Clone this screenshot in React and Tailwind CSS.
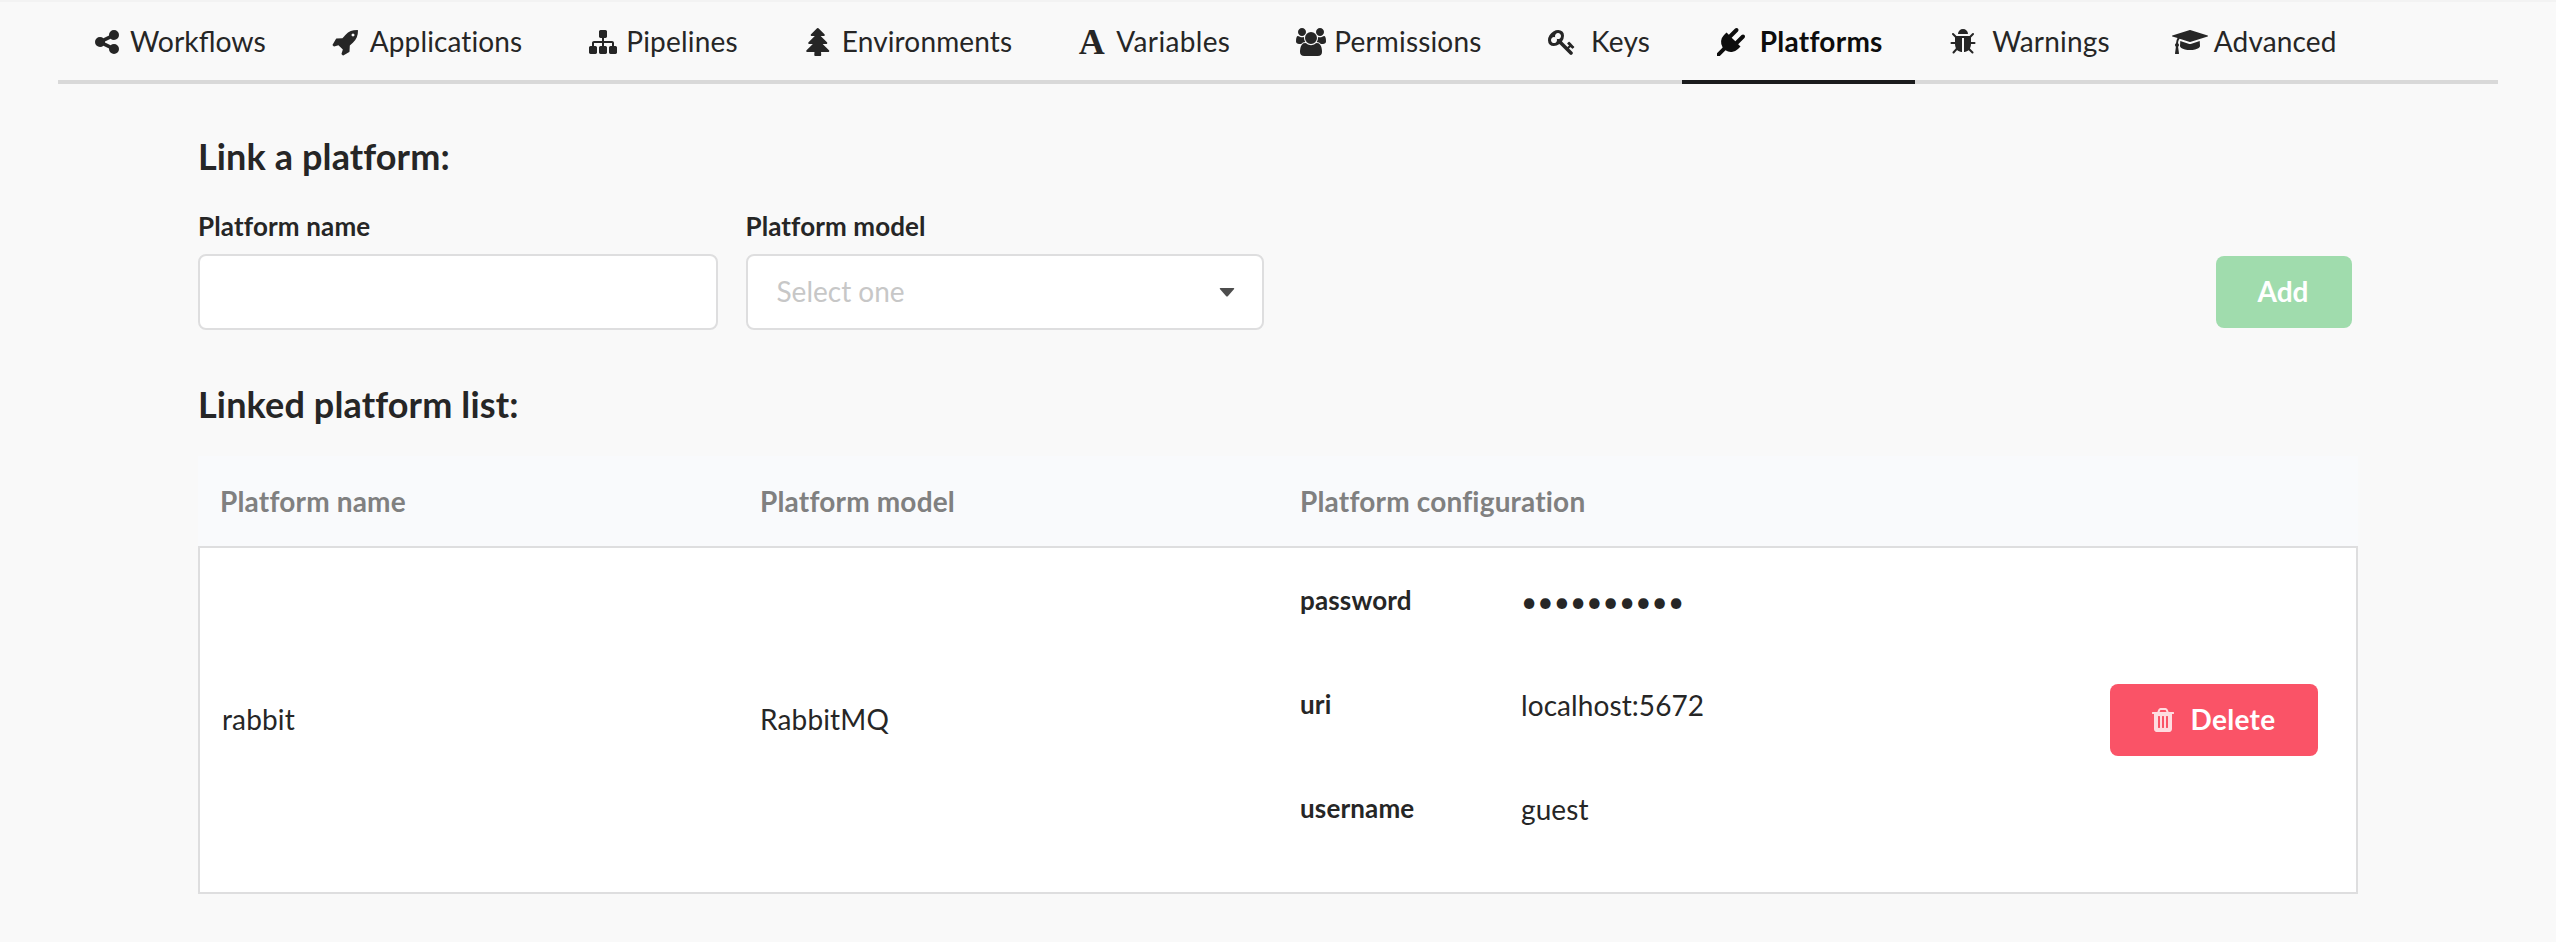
const ICONS = {
  share: {
    w: 1792,
    d: "M1344 1024q133 0 226.5 93.5t93.5 226.5-93.5 226.5-226.5 93.5-226.5-93.5-93.5-226.5q0-12 2-34l-360-180q-92 86-218 86-133 0-226.5-93.5t-93.5-226.5 93.5-226.5 226.5-93.5q126 0 218 86l360-180q-2-22-2-34 0-133 93.5-226.5t226.5-93.5 226.5 93.5 93.5 226.5-93.5 226.5-226.5 93.5q-126 0-218-86l-360 180q2 22 2 34t-2 34l360 180q92-86 218-86z",
  },
  rocket: {
    w: 1792,
    d: "M1440 448q0-40-28-68t-68-28-68 28-28 68 28 68 68 28 68-28 28-68zm224-288q0 249-75.5 430.5t-253.5 360.5q-81 80-195 176l-20 379q-2 16-16 26l-384 224q-7 4-16 4-12 0-23-9l-64-64q-13-14-8-32l85-276-281-281-276 85q-3 1-9 1-14 0-23-9l-64-64q-17-19-5-39l224-384q10-14 26-16l379-20q96-114 176-195 188-187 358-258t431-71q14 0 24 9.5t10 22.5z",
  },
  sitemap: {
    w: 1792,
    d: "M1792 1248v320q0 40-28 68t-68 28h-320q-40 0-68-28t-28-68v-320q0-40 28-68t68-28h96v-192h-512v192h96q40 0 68 28t28 68v320q0 40-28 68t-68 28h-320q-40 0-68-28t-28-68v-320q0-40 28-68t68-28h96v-192h-512v192h96q40 0 68 28t28 68v320q0 40-28 68t-68 28h-320q-40 0-68-28t-28-68v-320q0-40 28-68t68-28h96v-192q0-52 38-90t90-38h512v-192h-96q-40 0-68-28t-28-68v-320q0-40 28-68t68-28h320q40 0 68 28t28 68v320q0 40-28 68t-68 28h-96v192h512q52 0 90 38t38 90v192h96q40 0 68 28t28 68z",
  },
  tree: {
    w: 1792,
    d: "M1616 1472q0 26-19 45t-45 19h-462q1 17 6 87.5t5 108.5q0 25-18 42.5t-43 17.5h-320q-25 0-43-17.5t-18-42.5q0-38 5-108.5t6-87.5h-462q-26 0-45-19t-19-45 19-45l402-403h-229q-26 0-45-19t-19-45 19-45l402-403h-197q-26 0-45-19t-19-45 19-45l384-384q19-19 45-19t45 19l384 384q19 19 19 45t-19 45-45 19h-197l402 403q19 19 19 45t-19 45-45 19h-229l402 403q19 19 19 45z",
  },
  users: {
    w: 2048,
    d: "M657 896q-162 5-265 128h-134q-82 0-138-40.5t-56-118.5q0-353 124-353 6 0 43.5 21t97.5 42.5 119 21.5q67 0 133-23-5 37-5 66 0 139 81 256zm1071 637q0 120-73 189.5t-194 69.5h-874q-121 0-194-69.5t-73-189.5q0-53 3.5-103.5t14-109 26.5-108.5 43-97.5 62-81 85.5-53.5 111.5-20q10 0 43 21.5t73 48 107 48 135 21.5 135-21.5 107-48 73-48 43-21.5q61 0 111.5 20t85.5 53.5 62 81 43 97.5 26.5 108.5 14 109 3.5 103.5zm-1024-1277q0 106-75 181t-181 75-181-75-75-181 75-181 181-75 181 75 75 181zm704 384q0 159-112.5 271.5t-271.5 112.5-271.5-112.5-112.5-271.5 112.5-271.5 271.5-112.5 271.5 112.5 112.5 271.5zm576 225q0 78-56 118.5t-138 40.5h-134q-103-123-265-128 81-117 81-256 0-29-5-66 66 23 133 23 59 0 119-21.5t97.5-42.5 43.5-21q124 0 124 353zm-128-609q0 106-75 181t-181 75-181-75-75-181 75-181 181-75 181 75 75 181z",
  },
  key: {
    w: 1792,
    d: "M832 512q0-80-56-136t-136-56-136 56-56 136q0 42 19 83-41-19-83-19-80 0-136 56t-56 136 56 136 136 56 136-56 56-136q0-42-19-83 41 19 83 19 80 0 136-56t56-136zm851 704q0 17-49 66t-66 49q-9 0-28.5-16t-36.5-33-38.5-40-24.5-26l-96 96 220 220q28 28 28 68 0 42-39 81t-81 39q-40 0-68-28l-671-671q-176 131-365 131-163 0-265.5-102.5t-102.5-265.5q0-160 95-313t248-248 313-95q163 0 265.5 102.5t102.5 265.5q0 189-131 365l355 355 96-96q-3-3-26-24.5t-40-38.5-33-36.5-16-28.5q0-17 49-66t66-49q13 0 23 10 6 6 46 44.5t82 79.5 86.5 86 73 78 28.5 41z",
  },
  plug: {
    w: 1792,
    d: "M1755 453q37 38 37 90.5t-37 90.5l-401 400 150 150-160 160q-163 163-389.5 186.5t-411.5-100.5l-362 362h-181v-181l362-362q-124-185-100.5-411.5t186.5-389.5l160-160 150 150 400-401q38-37 91-37t90 37 37 90.5-37 90.5l-400 401 234 234 401-400q38-37 91-37t90 37z",
  },
  bug: {
    w: 1792,
    d: "M1696 960q0 26-19 45t-45 19h-224q0 171-67 290l208 209q19 19 19 45t-19 45q-18 19-45 19t-45-19l-198-197q-5 5-15 13t-42 28.5-65 36.5-82 29-97 13v-896h-128v896q-51 0-101.5-13.5t-87-33-66-39-43.5-32.5l-15-14-183 207q-20 21-48 21-24 0-43-16-19-18-20.5-44.5t15.5-46.5l202-227q-58-114-58-274h-224q-26 0-45-19t-19-45 19-45 45-19h224v-294l-173-173q-19-19-19-45t19-45 45-19 45 19l173 173h844l173-173q19-19 45-19t45 19 19 45-19 45l-173 173v294h224q26 0 45 19t19 45zm-480-576h-640q0-133 93.5-226.5t226.5-93.5 226.5 93.5 93.5 226.5z",
  },
  graduation: {
    w: 2304,
    d: "M1774 836l18 316q4 69-82 128t-235 93.5-323 34.5-323-34.5-235-93.5-82-128l18-316 574 181q22 7 48 7t48-7zm530-324q0 23-22 31l-1120 352q-4 1-10 1t-10-1l-652-206q-43 34-71 111.5t-34 178.5q63 36 63 109 0 69-58 107l58 433q2 14-8 25-9 11-24 11h-192q-15 0-24-11-10-11-8-25l58-433q-58-38-58-107 0-73 65-111 11-207 98-330l-333-104q-22-8-22-31t22-31l1120-352q4-1 10-1t10 1l1120 352q22 8 22 31z",
  },
  trash: {
    w: 1792,
    d: "M704 1376v-704q0-14-9-23t-23-9h-64q-14 0-23 9t-9 23v704q0 14 9 23t23 9h64q14 0 23-9t9-23zm256 0v-704q0-14-9-23t-23-9h-64q-14 0-23 9t-9 23v704q0 14 9 23t23 9h64q14 0 23-9t9-23zm256 0v-704q0-14-9-23t-23-9h-64q-14 0-23 9t-9 23v704q0 14 9 23t23 9h64q14 0 23-9t9-23zm-544-992h448l-48-117q-7-9-17-11h-317q-10 2-17 11zm928 32v64q0 14-9 23t-23 9h-96v948q0 83-47 143.5t-113 60.5h-832q-66 0-113-58.5t-47-141.5v-952h-96q-14 0-23-9t-9-23v-64q0-14 9-23t23-9h309l70-167q15-37 54-63t79-26h320q40 0 79 26t54 63l70 167h309q14 0 23 9t9 23z",
  },
};

function Icon({ name }) {
  const { w, d } = ICONS[name];
  return (
    <svg
      viewBox={`0 0 ${w} 1792`}
      width={w / 64}
      height={28}
      fill="currentColor"
      className="max-w-none shrink-0"
      aria-hidden="true"
    >
      <path d={d} />
    </svg>
  );
}

const TABS = [
  { label: "Workflows", icon: "share", text: "text-[28.4px]" },
  { label: "Applications", icon: "rocket", text: "tracking-[0.12px]" },
  { label: "Pipelines", icon: "sitemap", text: "tracking-[0.18px]" },
  { label: "Environments", icon: "tree", text: "tracking-[0.15px]" },
  { label: "Variables", letter: "A", text: "tracking-[0.35px]" },
  { label: "Permissions", icon: "users", text: "tracking-[0.16px]" },
  { label: "Keys", icon: "key", text: "pl-[5.5px] tracking-[0.25px]" },
  { label: "Platforms", icon: "plug", text: "pl-[5.5px] tracking-[0.26px]", active: true },
  { label: "Warnings", icon: "bug", text: "pl-[5.5px] tracking-[0.18px]" },
  { label: "Advanced", icon: "graduation", text: "tracking-[0.15px]" },
];

const CONFIG = [
  { name: "password", value: "••••••••••" },
  { name: "uri", value: "localhost:5672" },
  { name: "username", value: "guest" },
];

function Tab({ label, icon, letter, text, active }) {
  return (
    <a
      className={
        active
          ? "-mb-1 flex items-center border-b-4 border-[#1b1c1d] px-8 py-6 font-bold text-[#0d0d0d]"
          : "-mb-1 flex items-center border-b-4 border-transparent px-8 py-6"
      }
    >
      <span className="mr-[7px] flex h-7 w-[33px] items-center justify-center">
        {letter ? (
          <span className="pr-0.5 font-['Liberation_Serif',serif] text-[36px] leading-7 font-bold">{letter}</span>
        ) : (
          <Icon name={icon} />
        )}
      </span>
      <span className={`-mt-0.5 leading-7 ${text}`}>{label}</span>
    </a>
  );
}

export default function App() {
  return (
    <div className="h-[942px] w-[2556px] overflow-hidden border-t-2 border-[#f3f3f3] bg-[#f9f9f9] font-['Lato',sans-serif] text-[28px] text-[#262626]">
      <nav className="mx-[58px] mt-0.5 flex h-20 border-b-4 border-[#d9d9d9]">
        {TABS.map((tab) => (
          <Tab key={tab.label} {...tab} />
        ))}
      </nav>

      <main className="mx-[198px] pt-[49px] [font-variant-ligatures:none]">
        <h3 className="text-[36px] leading-[46px] font-bold tracking-[0.12px]">Link a platform:</h3>

        <form className="mt-[29px] flex items-end gap-7">
          <div className="flex w-[519.5px] flex-col gap-2.5">
            <label className="text-[26px] leading-9 font-bold tracking-[0.15px]">Platform name</label>
            <input
              type="text"
              className="h-[76px] w-full rounded-lg border-2 border-[#dededf] bg-white px-7 outline-none"
            />
          </div>
          <div className="flex w-[518.5px] flex-col gap-2.5">
            <label className="text-[26px] leading-9 font-bold tracking-[0.1px]">Platform model</label>
            <div className="flex h-[76px] items-center justify-between rounded-lg border-2 border-[#dededf] bg-white pr-[27px] pl-[29px] text-[#c7c7c7]">
              <span className="-mt-0.5 leading-10">Select one</span>
              <svg viewBox="0 0 16 9" width="16" height="9" fill="#4d4d4d" aria-hidden="true">
                <path d="M1.5 0h13q1.2 0 .6 1L9 8q-1 1-2 0L.9 1Q.3 0 1.5 0z" />
              </svg>
            </div>
          </div>
          <button
            type="button"
            className="mr-1.5 mb-0.5 ml-auto h-[72px] w-[136px] rounded-lg bg-[#a0dcad] pr-0.5 pb-0.5 leading-7 font-bold text-white"
          >
            Add
          </button>
        </form>

        <h3 className="mt-[51px] text-[36px] leading-[46px] font-bold tracking-[0.14px]">Linked platform list:</h3>

        <section className="mt-[29px]">
          <div className="grid grid-cols-4 bg-[#f9fafc] py-[25px] leading-10 font-bold tracking-[0.18px] text-[#808080]">
            <div className="px-[22px]">Platform name</div>
            <div className="px-[22px]">Platform model</div>
            <div className="px-[22px]">Platform configuration</div>
          </div>
          <div className="grid h-[348px] grid-cols-[538px_540px_1fr_auto] items-center border-2 border-[#dededf] bg-white leading-10">
            <div className="px-[22px] pb-0.5 tracking-[0.15px]">rabbit</div>
            <div className="px-[22px] pb-0.5 tracking-[0.15px]">RabbitMQ</div>
            <div className="flex h-full flex-col gap-16 pt-[34px] pl-[22px]">
              {CONFIG.map((entry) => (
                <div key={entry.name} className="grid h-10 grid-cols-[221px_1fr] items-start">
                  <span className="text-[26px] leading-9 font-bold tracking-[0.15px]">{entry.name}</span>
                  <span className="-mt-px tracking-[0.08px]">{entry.value}</span>
                </div>
              ))}
            </div>
            <button
              type="button"
              className="mr-[38px] flex h-[72px] w-52 items-center rounded-lg bg-[#fa5367] pl-[38.5px] leading-7 font-bold tracking-[0.3px] text-white"
            >
              <span className="mr-3.5 opacity-80">
                <Icon name="trash" />
              </span>
              <span className="-mt-0.5">Delete</span>
            </button>
          </div>
        </section>
      </main>
    </div>
  );
}
